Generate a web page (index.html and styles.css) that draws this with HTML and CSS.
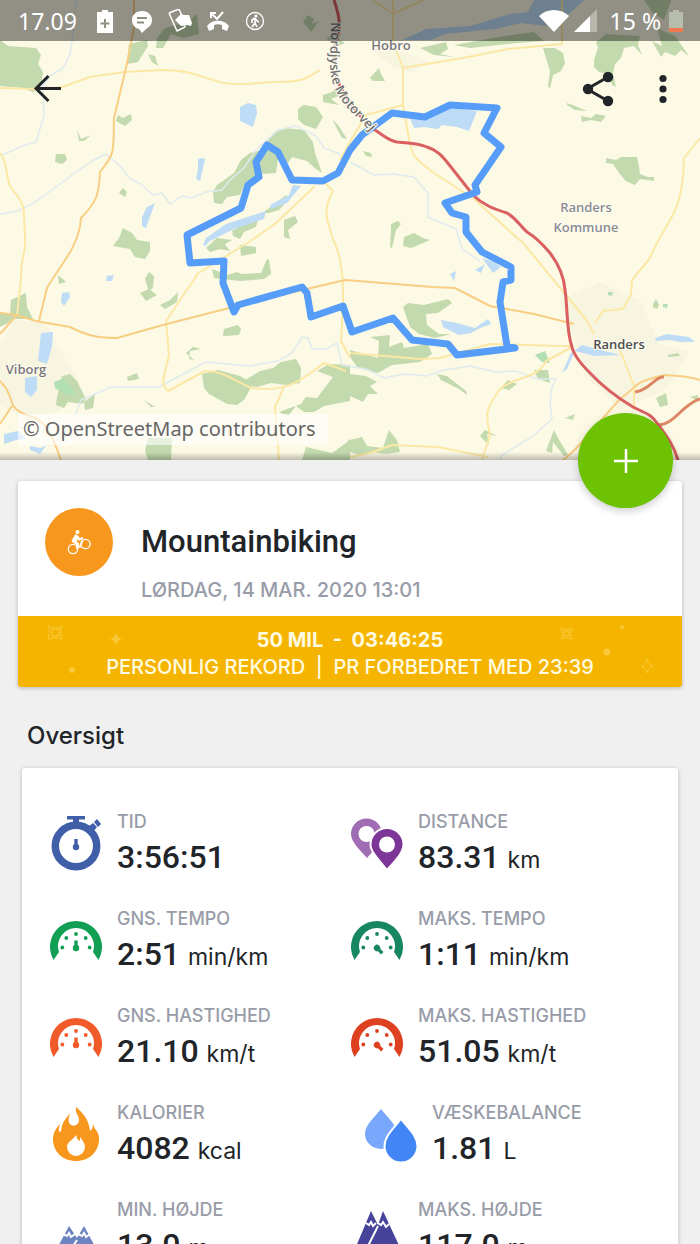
FILE: index.html
```html
<!DOCTYPE html>
<html lang="da">
<head>
  <meta charset="UTF-8" />
  <meta name="viewport" content="width=device-width, initial-scale=1" />
  <title>Mountainbiking</title>
  <link rel="stylesheet" href="styles.css">
</head>
<body>

<!-- shared icons -->
<svg class="defs" aria-hidden="true">
  <symbol id="gauge" viewBox="0 0 52 56">
    <path d="M3.500 47A26 26 0 1 1 48.500 47L43 39A18 18 0 1 0 9 39Z"/>
    <circle cx="12.300" cy="34.500" r="1.900"/><circle cx="16.300" cy="25" r="1.900"/><circle cx="26" cy="21" r="1.900"/>
    <circle cx="35.700" cy="25" r="1.900"/><circle cx="39.700" cy="34.500" r="1.900"/>
  </symbol>
  <symbol id="needle" viewBox="0 0 52 56">
    <circle cx="26" cy="35" r="3.200"/><path d="M24.300 27.500h3.400v8h-3.400z"/>
  </symbol>
</svg>

<div class="screen">
  <header class="hero">
    <svg class="map" viewBox="0 0 700 460" role="img" aria-label="Kort over ruten">
      <rect width="700" height="460" fill="#fcf9e5"/>
      <g fill="#f7f4e0">
        <path d="M15 320L45 322 60 350 78 378 60 410 30 420 0 405V345Z"/>
        <path d="M560 300L600 282 640 300 660 345 690 352 665 390 620 410 590 380 575 340Z"/>
        <path d="M372 48L402 52 430 62 410 72 392 66 380 58Z"/>
      </g>
      <!-- woods -->
      <g fill="#c3d9ae">
        <path d="M0 40L8 46 36 48 41 55 38 64 43 72 41 86 33 92 22 88 0 86Z"/>
        <path d="M129 44L147 40 148 46 138 62 127 64Z"/>
        <path d="M148 54l7 2 3 10-6-4z"/>
        <path d="M157 38l8-10 22-6 10-8 2 20-16 4-12-4-8 14-7 0z"/>
        <path d="M303 22l5-7 6 4-2 5 7-3-8 11zM326 38l7-3 12 8-9 4z"/>
        <path d="M323 95l9-3 5-4 4 7-10 4 8 6-16-3zM298 109l6-4 12 2 7 10-7 12-12-4-6-6zM332 119l6 6 9 14-5-1z"/>
        <path d="M118 115l5 3 8-4 1 6-7 6-9-5zM77 130l4 9 10-4-7 6-5 0zM56 154l9 0 2 6-5 4-7-2z"/>
        <path d="M273 133L285 128 304 130 313 142 315 153 322 173 316 169 307 161 292 157 288 163 278 158 276 173 260 174 243 188 240 195 227 197 222 204 214 203 213 192 217 185 234 173 241 160 250 153 262 150Z"/>
        <path d="M113 246l6-8 4-10 9 5 5 7 13 2v9l-5 8-10-2-5-8z"/>
        <path d="M119 193l4-5 4 4-2 5zM206 248l11-10 15 2-7 4 5 7-10-2-10 3zM232 231l14-9 12-2-2 7-12 5-4 7-7-3zM262 213l10-7 14-11 2 5-9 10-10 3zM284 220l11-4 3 6-10 8 2 9-6-2z"/>
        <path d="M240 245l16 2v6l-15 3zM212 269l15 6 10-3 4 2 20-1 6-14 2 1 2 14-7 5-24 2-26-3z"/>
        <path d="M145 279l4-7 5 4-1 11-4 5zM58 275l8 7-7 2zM140 293l9-4 8 6-11 6z"/>
        <path d="M11 300l15-7 1 14 6 12-15 0-8-2zM0 312l16 3-8 8-8 4zM160 305l10-5 8-8-1 10-12 7zM186 353l7-6 8 2-11 2-1 8 5 1zM224 329l14-4 3 4-2 6-16 1z"/>
        <path d="M202 374L218 370 240 376 253 384 244 400 237 405 227 404 209 394 204 388ZM245 380l15-9 13-3 8-6 15-3 5 9-1 15-14 2-15-2-14 4-14-2z"/>
        <path d="M279 412l22-8 5-7 11 1 16-21-16-6 12-7 21 1 0 36-26 5-10 6-10 0-8-6-8 10z"/>
        <path d="M350 350l28 8 1-17-9-4 20-2-1 12 13-5 2 6 24-4 4 10-12 8-28 3-14 8-20-5-8-11z"/>
        <path d="M403 307l5-4 16 2 24-6 4 4-14 10-12 1 1 11 12 9 12 0-16 4-16-4-9-7z"/>
        <path d="M350 374l16 2 11 6-7 4 8 8-10 0-5 8-13-6zM437 374l10 2 19 15 1 4-8-6-18-9zM501 388l7-8 9 4-8 6zM534 370l14 0 2 13-12-4z"/>
        <path d="M350 440l12-3 5 9 16 2 6-18 8 10 3 12-14 2-16-2-10 3-10-3zM554 430l4 8 10 17-4 1-11-14-1 11-6-2zM485 430l12 6-10-2 2 11-9-9zM565 418l10-4-2 6z"/>
        <path d="M57 398l5-22 8-2 7 7 9 18-4 5-14-2-4 6-8-3zM84 402l11-8-2 14-8 2zM127 377l10-4 2 6-11 2zM144 400l11 7-4 0zM145 451l3-13 24 0-1 22h-23zM302 460l4-13 26 6 14-10 4-4v21z"/>
        <path d="M606 158l10 2 5-3 16 0 2 10 1 7 8 3 6 0 0 4-14-2-5 6-9-4-7-8-6-9-7-1z"/>
        <path d="M543 48l12 0 8 5 2 10-4 8-8 4-3 13-2-1 2-16z"/>
        <path d="M594 60l4-12-2-6 10-8 34 2-2 9 4 10-8-9-10 2-3 10-6 6-2 9 3 14-4-2-4-11-9-2-5-5z"/>
        <path d="M652 41l10 5-5-18 18 8 14 20-8-6-6 6-10-4-4 5zM650 0l22-2-8 22-12-8-8-12z"/>
        <path d="M370 78l9-10 2 6 4 7-12 0zM420 48l26-6 2 7-8 5 14 3-20-2zM454 45l44-8 36-5 10 9-26 2-20 2-28 3z"/>
        <path d="M404 237l10-4 9 5 7 2-9 4-10 4-8-2zM391 224l7-3 3 3-5 6-4 18-2-1 1-17z"/>
        <path d="M581 116l10 2 5-4 10 2-5 6-10-2-9 2zM567 103l8 3 12 5-12-1-8-5zM653 304l3-5 3 6-2 4-4-2zM656 398l10-5 2 12-8 2zM690 397l8-2 0 6zM668 355l10-2 2 3-12 1zM363 151l8 2 1 4-6-1z"/>
      </g>
      <g fill="#b3e0b3">
        <path d="M54 382l8-3 8 6 5 8-6 3-14-8zM535 355l10-4 5 12-8-1zM608 292l5 0-1 4-4-1zM663 304l5 0-1 4-4-1z"/>
      </g>
      <!-- lakes -->
      <g fill="#bedcf6">
        <path d="M400 41l26-12 44-3 40-12 18-2 6-12h50l-15 14-24 12-24-3-26 6-50 5-14 6-31 0z"/>
        <path d="M240 107l8-4 8 2 1 8-4 14-13-6zM198 159l4-1 3 1-5 22-4-2 2-10zM147 207l8-4-3 8-6 17-4-2 0-9z"/>
        <path d="M203 245l3-7 20-14 40-13-2 8-30 10-24 12-5 5zM270 205l19-10 4-10 8 1-14 17-16 6z"/>
        <path d="M41 333l12-1-1 14-5 18-9-3zM25 378l12-2 0 14-6 7-6-5zM4 434l14-3 8 8-10 1-12 4zM30 446l10 2 6-2-6 8-10-4zM62 293l7-1 1 5-6 9-3-4zM107 276l7-1-2 6-6 0z"/>
        <path d="M441 320l16 3 18 5 13-9 3 5-11 4-9 5-12 2-16-8zM410 118l18 2 22-12 27 3-8 20-12-4-15-2-4 4-14-2-10 1z"/>
        <path d="M562 373l9-20 11-8 38 10-25 1-20-5-8 18zM655 338l12-4 22 3 6 5-15 0-10-2-14 1zM475 270l10-6-4 9zM450 274l6-3-2 10zM482 258l12 4 7 5-8 6z"/>
      </g>
      <!-- streams -->
      <g fill="none" stroke="#dfebee" stroke-width="1.500">
        <path d="M76 0l-4 42-2 12-7 14-13 8-7 10 1 30-8 26-14 4-22 10"/>
        <path d="M0 214l18-3 14-7 20-14 20-15 20-14 14-7 14 12 9 12 12 6 12 11 9-2 8 11 12-8 10 2 14-6 16-2 8-10 14-12 12-18 22-20 18-4 20 10 8 12 16 6"/>
        <path d="M350 162l24 13 20-1 20 3 14 16 0 24 28 12 6 20 18 12"/>
        <path d="M75 416l6-16 30-13 48 0 34-18 12-7 45 4 28-5 14-8 10-16 6 1 4 11 14 0 11-6 5 22 24 4 18 9 20-4 22 2 18-6 26-4 26 6 20-1 20 8h20l-4 8-2 16 2 16-20 18-30 18-10 24"/>
      </g>
      <!-- yellow roads -->
      <g fill="none" stroke="#fbe8a4" stroke-width="2" stroke-linejoin="round">
        <path d="M0 88l34 1 28-2 28-10 34-5 38-2c30 0 40 8 62 13 24 4 36-2 54-1 24 0 28-3 42-12"/>
        <path d="M0 153c10 14 4 24 12 36 8 10 13 15 12 32 4 40-4 30-3 58l-4 36M194 280l-8 11-20 30 3 34c-4 20-10 28-1 36l37-20c18 0 26 8 46 17 30 4 44-2 73-25l22 8M194 280l3-6 52-32 26-18 40-38M323 181l10 10c-12 22-5 30 0 48 14 28 10 70 8 102l9 17M284 387l-9 20 4 53"/>
        <path d="M340 160l14-25 12-20 37-10V68l-10-26 0-42M393 14l-20-14M393 14l30-14M403 68l60-10 45-9 54-5V0M403 105l6 34c4 14 0 16 25 34l40 26 50 45 64 78 6 12M700 138l-16 20c-1 60-18 60-34 100l-18 22-1 14-8 15-20 2-8 12"/>
        <path d="M350 353l70 6 20-1 50-14 70 2 12 0M572 347l-26 14c-10 20-30 14-46 28-16 22-14 26-10 46l-8 25M350 457l20-4 22-8 46 2 50 10M620 350l14 36 0 20"/>
      </g>
      <!-- main roads -->
      <g fill="none" stroke="#f8ce83" stroke-width="2" stroke-linejoin="round">
        <path d="M134 0v28l-8 40-12 50c-1 34 2 34-14 54-1 22-3 30-19 46-2 30-22 48-34 70l-8 33"/>
        <path d="M0 313l16 2 20 6 34 6c20 10 30 11 47 11l46-13 70-18 40-10 72-17 88 7 22 1 35 18 44 8 40 10M0 381c20 20 0 26 35 37 14 6 20 26 26 42M0 424l12-18 M0 334l16-18"/>
        <path d="M550 468c20-8 40-36 70-69 20-14 10-16 45-24 10 1 24 1 35 5"/>
      </g>
      <path d="M635 392c15-2 20-16 29-15M657 425c18 0 24-20 43-26" fill="none" stroke="#dc8663" stroke-width="3"/>
      <path d="M334 0C338 12 341 22 338 35C332 62 333 80 349 101C358 116 367 123 375 130C383 135 389 141 397 142C410 143 419 143 427 147C437 150 442 156 447 162L473 195C483 205 494 209 507 213C517 219 520 226 527 232C537 238 545 247 550 253C560 266 564 278 565 290C568 310 566 330 572 347C574 356 583 366 590 373C603 387 618 398 633 407C644 413 650 413 657 423C668 438 674 446 678 460" fill="none" stroke="#d95f60" stroke-width="3"/>
      <path d="M515 348L507 346 500 302 503 282 511 280V267L482 252 466 232V217L452 213 445 203 477 192 475 185 501 147 484 133 497 108 450 105 425 117 392 113 362 135 350 150 338 173 323 181 292 180 278 152 267 145 256 162 259 177 248 185 241 208 187 235 190 263 224 261 223 283 234 312 238 305 302 287 307 293 311 317 343 306 352 332 393 318 412 340 448 344 457 355Z" fill="none" stroke="#559df8" stroke-width="7" stroke-linejoin="round"/>
      <path id="motorway" d="M331 22C332 58 324 76 342 101C352 114 360 120 372 134" fill="none"/>
      <g class="place">
        <text class="road"><textPath href="#motorway">Nordjyske Motorvej</textPath></text>
        <text x="391" y="50">Hobro</text>
        <text class="area" x="586" y="212">Randers</text>
        <text class="area" x="586" y="232">Kommune</text>
        <text class="town" x="619" y="349">Randers</text>
        <text x="26" y="374">Viborg</text>
      </g>
    </svg>

    <div class="hero-top">
      <div class="statusbar">
        <span class="clock">17.09</span>
        <svg class="notices" viewBox="0 0 170 24" fill="#fff" aria-hidden="true">
          <path d="M5 1h6v2h5v21H0V3h5z"/><path d="M8 10v9M3.500 14.500h9" stroke="#8f8f82" stroke-width="2"/>
          <path d="M45 2c6 0 10 4 10 9 0 5-3 7-6 9l-4 4-3-4c-4-1-7-4-7-9 0-5 4-9 10-9z"/><path d="M40 9h10M40 13.500h7" stroke="#8f8f82" stroke-width="2"/>
          <path d="M72 4l10-4 3 7M72 4l8 18 8-4-1-3" fill="none" stroke="#fff" stroke-width="1.500" stroke-linejoin="round"/><path d="M81 8l3-3 3 1 5 0 3 8-1 3-4-1-6 1-3-3-3-3z"/>
          <path d="M110 17c5-7 17-7 22 0l-2 5-5-2v-4c-3-1-5-1-8 0v4l-5 2z"/><path d="M114 4l6 6 6-7M114 9V4h5" fill="none" stroke="#fff" stroke-width="2"/>
          <circle cx="158" cy="12" r="8.500" fill="none" stroke="#fff" stroke-width="1.300"/><circle cx="159" cy="7" r="1.500"/>
          <path d="M158 9l-3 2v3M158 9l2 3 2 1M158 9v5l2 4M158 14l-3 4" fill="none" stroke="#fff" stroke-width="1.600"/>
        </svg>
        <svg class="signals" viewBox="0 0 60 24" fill="#fff" aria-hidden="true">
          <path d="M1 7C9-1 23-1 31 7L16 23z"/>
          <path d="M59 0v23h-7V7z" opacity=".35"/><path d="M36 23L52 7v16z"/>
        </svg>
        <span class="charge">15 %</span>
        <svg class="battery" viewBox="0 0 14 24" aria-hidden="true">
          <path d="M4 1h6v2h4v16H0V3h4z" fill="#b6bdab"/><path d="M0 19h14v4H0z" fill="#ef7a52"/>
        </svg>
      </div>
      <div class="toolbar">
        <button class="tool" type="button" aria-label="Tilbage">
          <svg viewBox="0 0 36 36"><path d="M32 17.500H7M19.500 5L7 17.500l12.500 12.500" fill="none" stroke="#212529" stroke-width="3"/></svg>
        </button>
        <button class="tool share" type="button" aria-label="Del">
          <svg viewBox="0 0 36 36" fill="#212529"><path d="M27 6L6 18l21 12" fill="none" stroke="#212529" stroke-width="3"/><circle cx="27" cy="6" r="5.200"/><circle cx="7" cy="18" r="5.200"/><circle cx="27" cy="30" r="5.200"/></svg>
        </button>
        <button class="tool" type="button" aria-label="Mere">
          <svg viewBox="0 0 36 36" fill="#212529"><circle cx="18" cy="7.500" r="3.600"/><circle cx="18" cy="18" r="3.600"/><circle cx="18" cy="28.500" r="3.600"/></svg>
        </button>
      </div>
    </div>

    <a class="credit" href="#">© OpenStreetMap contributors</a>
    <button class="fab" type="button" aria-label="Tilføj">
      <svg viewBox="0 0 24 24"><path d="M12 0v24M0 12h24" stroke="#fff" stroke-width="2.500"/></svg>
    </button>
  </header>

  <section class="activity">
    <div class="activity-head">
      <div class="sport">
        <svg viewBox="0 0 26 26" fill="none" stroke="#fff" aria-hidden="true">
          <circle cx="7" cy="20" r="4.700" stroke-width="1.300"/><circle cx="19.500" cy="15" r="4.700" stroke-width="1.300"/>
          <circle cx="11.500" cy="3" r="2" fill="#fff" stroke="none"/>
          <path d="M10.500 6.500L7 12l5 3-1 5M11 7l2 3.500 4-1.500" stroke-width="2.400" stroke-linejoin="round"/><path d="M7 12l7 6 3-7" stroke-width="1.500"/>
          <path d="M9.500 5l3 2-2 6-5-1z" fill="#fff" stroke="none"/>
        </svg>
      </div>
      <div>
        <h1>Mountainbiking</h1>
        <p class="date">LØRDAG, 14 MAR. 2020 13:01</p>
      </div>
    </div>
    <div class="record">
      <svg class="sparks left" viewBox="0 0 90 60" fill="none" stroke="#f9c93a" stroke-width="1" aria-hidden="true">
        <path d="M15 7q7 4 14 0q-3 6 0 13q-7-3-14 0q3-7 0-13zM19 10h7v7h-7z"/>
        <path d="M83 13q1 7 7 7q-6 0-7 7q-1-7-7-7q6 0 7-7z" fill="#f9c93a" stroke="none"/><circle cx="39" cy="51" r="3" fill="#f9c93a" stroke="none"/>
      </svg>
      <p class="record-time">50 MIL &nbsp;- &nbsp;03:46:25</p>
      <p>PERSONLIG REKORD &nbsp;| &nbsp;PR FORBEDRET MED 23:39</p>
      <svg class="sparks right" viewBox="0 0 100 60" fill="none" stroke="#f9c93a" stroke-width="1" aria-hidden="true">
        <path d="M5 9q6 3 11 0q-3 5 0 11q-5-3-11 0q3-6 0-11zM8 12h5v5h-5z"/>
        <circle cx="51" cy="33" r="3.500" fill="#f9c93a" stroke="none"/><circle cx="66" cy="8" r="2" fill="#f9c93a" stroke="none"/>
        <path d="M91 40q1 6 6 7q-5 1-6 7q-1-6-6-7q5-1 6-7z"/>
      </svg>
    </div>
  </section>

  <h2>Oversigt</h2>

  <section class="stats">
    <div class="stat">
      <svg class="icon" viewBox="0 0 52 56" fill="#415fa9" aria-hidden="true">
        <circle cx="26" cy="30" r="20.700" fill="none" stroke="#415fa9" stroke-width="7.500"/>
        <path d="M17 0h18v3.500h-6V8h-6V3.500h-6zM38 11l5-4 4 4-4 5zM44 6l3-3 4 5-3 3z"/>
        <circle cx="26" cy="31" r="3.200"/><path d="M24.300 23h3.400v8h-3.400z"/>
      </svg>
      <div><p class="label">TID</p><p class="value">3:56:51</p></div>
    </div>
    <div class="stat">
      <svg class="icon" viewBox="0 0 52 56" aria-hidden="true">
        <path d="M16 42C9 34 0 26 0 18a15.500 15.500 0 0 1 31 0c0 8-8 16-15 24z" fill="#a06cb3"/><circle cx="15.500" cy="18" r="8" fill="#fff"/>
        <path d="M36 54C28 44 19.500 36 19.500 28.500a16.500 16.500 0 0 1 33 0c0 8-8 16-16.500 25.500z" fill="#7d3597" stroke="#fff" stroke-width="2"/><circle cx="36" cy="28.500" r="8" fill="#fff"/>
      </svg>
      <div><p class="label">DISTANCE</p><p class="value">83.31 <span>km</span></p></div>
    </div>
    <div class="stat">
      <svg class="icon" viewBox="0 0 52 56" fill="#119f53" aria-hidden="true"><use href="#gauge"/><use href="#needle"/></svg>
      <div><p class="label">GNS. TEMPO</p><p class="value">2:51 <span>min/km</span></p></div>
    </div>
    <div class="stat">
      <svg class="icon" viewBox="0 0 52 56" fill="#178763" aria-hidden="true"><use href="#gauge"/><use href="#needle" transform="rotate(135 26 35)"/></svg>
      <div><p class="label">MAKS. TEMPO</p><p class="value">1:11 <span>min/km</span></p></div>
    </div>
    <div class="stat">
      <svg class="icon" viewBox="0 0 52 56" fill="#f15a29" aria-hidden="true"><use href="#gauge"/><use href="#needle"/></svg>
      <div><p class="label">GNS. HASTIGHED</p><p class="value">21.10 <span>km/t</span></p></div>
    </div>
    <div class="stat">
      <svg class="icon" viewBox="0 0 52 56" fill="#de4120" aria-hidden="true"><use href="#gauge"/><use href="#needle" transform="rotate(135 26 35)"/></svg>
      <div><p class="label">MAKS. HASTIGHED</p><p class="value">51.05 <span>km/t</span></p></div>
    </div>
    <div class="stat">
      <svg class="icon" viewBox="0 0 52 56" aria-hidden="true">
        <path d="M26 0c6 5 13 12 14 24 2-1 3-4 3-7 1 2 1 4 3 6 2 3 3 5 3 9 0 13-10 22-23 22S3 45 3 32c0-6 3-11 7-15-1 4-2 7 0 8 2 0 1-5 3-9 3-5 5-7 7-10-1 5-3 9 1 12 4 2 8-1 8-5 0-5-4-6-3-13z" fill="#f8971d"/>
        <path d="M26 28c1 4 2 5 4 6v-4c3 4 5 7 5 10a9 9 0 0 1-18 0c0-5 6-7 9-12z" fill="#fff"/>
      </svg>
      <div><p class="label">KALORIER</p><p class="value">4082 <span>kcal</span></p></div>
    </div>
    <div class="stat fluid">
      <svg class="icon" viewBox="0 0 52 56" aria-hidden="true">
        <path d="M16 2c7 9 16 16 16 25a16 15 0 0 1-32 0c0-9 9-16 16-25z" fill="#78a7fb"/>
        <path d="M36 12c7 9 16.500 17 16.500 27a16.500 16.500 0 0 1-33 0c0-10 9.500-18 16.500-27z" fill="#4285f4" stroke="#fff" stroke-width="2"/>
      </svg>
      <div><p class="label">VÆSKEBALANCE</p><p class="value">1.81 <span>L</span></p></div>
    </div>
    <div class="stat">
      <svg class="icon" viewBox="0 0 52 56" aria-hidden="true">
        <path d="M4 50L19 22l8 12 7-12 15 28z" fill="#6c85c1"/>
        <path d="M13 30l4 2 2-3 2 4 4-3M28 30l4 2 2-3 2 4 4-3M18 50l9-14" fill="none" stroke="#fff" stroke-width="2"/>
      </svg>
      <div><p class="label">MIN. HØJDE</p><p class="value">13.0 <span>m</span></p></div>
    </div>
    <div class="stat">
      <svg class="icon" viewBox="0 0 52 56" aria-hidden="true">
        <path d="M1 52L20 7l7 14 5-14 21 45z" fill="#45439a"/>
        <path d="M15 19l3 2 2-3 2 4 3-3M27 19l3 2 2-3 3 5 3-3M16 44l11-22" fill="none" stroke="#fff" stroke-width="2"/>
      </svg>
      <div><p class="label">MAKS. HØJDE</p><p class="value">117.0 <span>m</span></p></div>
    </div>
  </section>
</div>

</body>
</html>
```

FILE: styles.css
```css
* {
  box-sizing: border-box;
}
body {
  margin: 0;
  background: #f0f0f0;
  color: #212529;
  font-family: Inter, Roboto, sans-serif;
}
h1, h2, p {
  margin: 0;
}
button {
  border: none;
  padding: 0;
  background: none;
  cursor: pointer;
}
svg {
  display: block;
}
.defs {
  position: absolute;
  width: 0;
  height: 0;
}
.screen {
  height: 100vh;
  overflow: hidden;
}

/* map */
.hero {
  position: relative;
}
.hero::after {
  content: "";
  position: absolute;
  left: 0;
  right: 0;
  bottom: 0;
  height: 8px;
  background: linear-gradient(transparent, rgba(0, 0, 0, 0.25));
}
.map {
  width: 100%;
  height: auto;
}
.place text {
  font: 600 13px "Open Sans", "Noto Sans", sans-serif;
  text-anchor: middle;
  fill: #77777d;
  stroke: #fffdf0;
  stroke-width: 2px;
  stroke-linejoin: round;
  paint-order: stroke;
}
.place .area {
  fill: #8b8b94;
}
.place .town {
  fill: #4c4c50;
}
.place .road {
  text-anchor: start;
  fill: #707070;
}
.hero-top {
  position: absolute;
  top: 0;
  left: 0;
  right: 0;
}
.statusbar {
  display: flex;
  align-items: center;
  height: 41px;
  padding: 0 17px 0 18px;
  background: rgba(0, 0, 0, 0.42);
  color: #fff;
  font: 23px "Noto Sans", sans-serif;
}
.notices {
  width: 170px;
  height: 24px;
  margin: 0 auto 0 20px;
}
.signals {
  width: 60px;
  height: 24px;
}
.charge {
  margin: 0 8px 0 12px;
}
.battery {
  width: 14px;
  height: 24px;
}
.toolbar {
  display: flex;
  gap: 28px;
  padding: 30px 19px 0 29px;
}
.tool, .tool svg {
  width: 36px;
  height: 36px;
}
.share {
  margin-left: auto;
}
.credit {
  position: absolute;
  left: 18px;
  bottom: 15px;
  padding: 0 12px 2px 5px;
  background: rgba(255, 255, 255, 0.6);
  color: #666;
  font: 20px/29px "Noto Sans", sans-serif;
  text-decoration: none;
}
.fab {
  position: absolute;
  z-index: 1;
  right: 27px;
  bottom: -48px;
  display: grid;
  place-items: center;
  width: 95px;
  height: 95px;
  border-radius: 50%;
  background: #6cc203;
  box-shadow: 0 3px 8px rgba(0, 0, 0, 0.2);
}
.fab svg {
  width: 24px;
  height: 24px;
}

/* activity card */
.activity {
  margin: 21px 18px 0;
  border-radius: 3px;
  background: #fff;
  box-shadow: 0 1px 4px rgba(0, 0, 0, 0.25);
  overflow: hidden;
}
.activity-head {
  display: flex;
  gap: 28px;
  padding: 27px 27px 12px;
}
.sport {
  display: grid;
  place-items: center;
  width: 68px;
  height: 68px;
  border-radius: 50%;
  background: #f8971d;
}
.sport svg {
  width: 26px;
  height: 26px;
}
h1 {
  font: 500 31px/68px Roboto, sans-serif;
}
.date {
  color: #989ca8;
  font-size: 20px;
  font-weight: 500;
  line-height: 28px;
}
.record {
  position: relative;
  padding: 11px 0 6px;
  background: #f5b400;
  color: #fffbe0;
  font-size: 20px;
  font-weight: 500;
  line-height: 27px;
  text-align: center;
}
.record-time {
  font-weight: 700;
}
.sparks {
  position: absolute;
  top: 3px;
  height: 60px;
}
.left {
  left: 15px;
  width: 90px;
}
.right {
  right: 26px;
  width: 100px;
}

/* overview */
h2 {
  margin: 32px 27px 15px;
  font-size: 24px;
  font-weight: 500;
  line-height: 34px;
}
.stats {
  display: grid;
  grid-template-columns: 1fr 1fr;
  margin: 0 22px;
  padding: 43px 27px;
  border-radius: 3px;
  background: #fff;
  box-shadow: 0 1px 4px rgba(0, 0, 0, 0.25);
}
.stat {
  display: flex;
  gap: 15px;
  height: 97px;
}
.fluid {
  padding-left: 14px;
}
.icon {
  flex: none;
  width: 52px;
  height: 56px;
  margin: 5px 0 0 1px;
}
.label {
  color: #989ca8;
  font-size: 18px;
  font-weight: 500;
  line-height: 22px;
}
.value {
  font: 500 32px/48px Roboto, sans-serif;
}
.value span {
  font: 23px Inter, Roboto, sans-serif;
}
```
